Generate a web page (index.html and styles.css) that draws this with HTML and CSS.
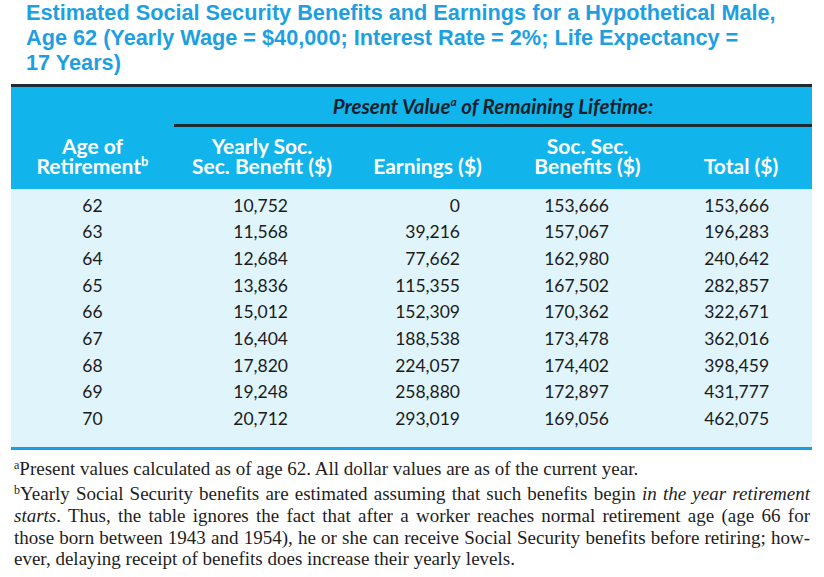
FILE: index.html
```html
<!DOCTYPE html>
<html>
<head>
<meta charset="utf-8">
<link rel="stylesheet" href="styles.css">
</head>
<body>
<h1 class="title">Estimated Social Security Benefits and Earnings for a Hypothetical Male,<br>Age 62 (Yearly Wage = $40,000; Interest Rate = 2%; Life Expectancy =<br>17 Years)</h1>
<table class="data">
  <colgroup>
    <col class="c1"><col class="c2"><col class="c3"><col class="c4"><col class="c5">
  </colgroup>
  <thead>
    <tr class="span-row">
      <th></th>
      <th colspan="4" class="span-head"><span>Present Value<sup>a</sup> of Remaining Lifetime:</span></th>
    </tr>
    <tr class="col-row">
      <th>Age of<br>Retirement<sup>b</sup></th>
      <th>Yearly Soc.<br>Sec. Benefit ($)</th>
      <th>Earnings ($)</th>
      <th>Soc. Sec.<br>Benefits ($)</th>
      <th>Total ($)</th>
    </tr>
  </thead>
  <tbody>
    <tr class="first"><td>62</td><td>10,752</td><td>0</td><td>153,666</td><td>153,666</td></tr>
    <tr><td>63</td><td>11,568</td><td>39,216</td><td>157,067</td><td>196,283</td></tr>
    <tr><td>64</td><td>12,684</td><td>77,662</td><td>162,980</td><td>240,642</td></tr>
    <tr><td>65</td><td>13,836</td><td>115,355</td><td>167,502</td><td>282,857</td></tr>
    <tr><td>66</td><td>15,012</td><td>152,309</td><td>170,362</td><td>322,671</td></tr>
    <tr><td>67</td><td>16,404</td><td>188,538</td><td>173,478</td><td>362,016</td></tr>
    <tr><td>68</td><td>17,820</td><td>224,057</td><td>174,402</td><td>398,459</td></tr>
    <tr><td>69</td><td>19,248</td><td>258,880</td><td>172,897</td><td>431,777</td></tr>
    <tr class="last"><td>70</td><td>20,712</td><td>293,019</td><td>169,056</td><td>462,075</td></tr>
  </tbody>
</table>
<div class="notes">
  <p class="note"><sup>a</sup>Present values calculated as of age 62. All dollar values are as of the current year.</p>
  <div class="note">
    <span class="jl"><sup>b</sup>Yearly Social Security benefits are estimated assuming that such benefits begin <i>in the year retirement</i></span>
    <span class="jl"><i>starts</i>. Thus, the table ignores the fact that after a worker reaches normal retirement age (age 66 for</span>
    <span class="jl">those born between 1943 and 1954), he or she can receive Social Security benefits before retiring; how-</span>
    <span class="ll">ever, delaying receipt of benefits does increase their yearly levels.</span>
  </div>
</div>
</body>
</html>
```

FILE: styles.css
```css
* { box-sizing: border-box; }
body {
  margin: 0;
  background: #ffffff;
}
.title {
  margin: 0 0 0 26px;
  font-family: "Liberation Sans", Arial, sans-serif;
  font-weight: bold;
  font-size: 21.7px;
  line-height: 25px;
  color: #1d9fe2;
}
.data {
  margin: 9px 0 0 11px;
  width: 801px;
  border-collapse: collapse;
  table-layout: fixed;
  font-family: Lato, "Open Sans", sans-serif;
}
.c1 { width: 163px; }
.c2 { width: 176px; }
.c3 { width: 155px; }
.c4 { width: 165px; }
.c5 { width: 142px; }
thead { background: #12b4ec; }
.span-row { border-top: 3px solid #1b2a33; }
.span-row th { height: 40px; padding: 0; vertical-align: middle; }
.span-head {
  border-bottom: 3px solid #1b2a33;
  color: #14222c;
  font-style: italic;
  font-weight: bold;
  font-size: 20.5px;
  line-height: 24px;
  text-align: center;
}
.span-head sup { font-size: 12px; line-height: 0; }
.col-row th {
  color: #ffffff;
  font-weight: bold;
  font-size: 21px;
  line-height: 19.5px;
  text-align: center;
  vertical-align: bottom;
  padding: 9px 0 14px;
}
.col-row th sup { font-size: 13px; line-height: 0; }
tbody { background: #e0f4fc; }
tbody td {
  font-size: 17.5px;
  line-height: 26.67px;
  height: 26.67px;
  padding: 0;
  color: #1b1b1b;
  text-align: right;
}
tbody td:nth-child(1) { text-align: center; }
tbody td:nth-child(2) { padding-right: 62px; }
tbody td:nth-child(3) { padding-right: 45px; }
tbody td:nth-child(4) { padding-right: 61px; }
tbody td:nth-child(5) { padding-right: 43px; }
tbody tr.first td { padding-top: 3.5px; height: 30.17px; }
tbody tr.last td { padding-bottom: 14px; height: 40.67px; }
tbody tr.last { border-bottom: 3px solid #1aa0e0; }
.notes {
  margin: 8px 14px 0 14px;
  font-family: "Liberation Serif", "Times New Roman", serif;
  font-size: 19px;
  color: #1e1e1e;
}
.note { margin: 0 0 4px 0; line-height: 21.7px; }
.note sup { font-size: 12px; vertical-align: 6px; line-height: 0; }
.jl {
  display: block;
  text-align: justify;
  text-align-last: justify;
}
.ll { display: block; }
```
